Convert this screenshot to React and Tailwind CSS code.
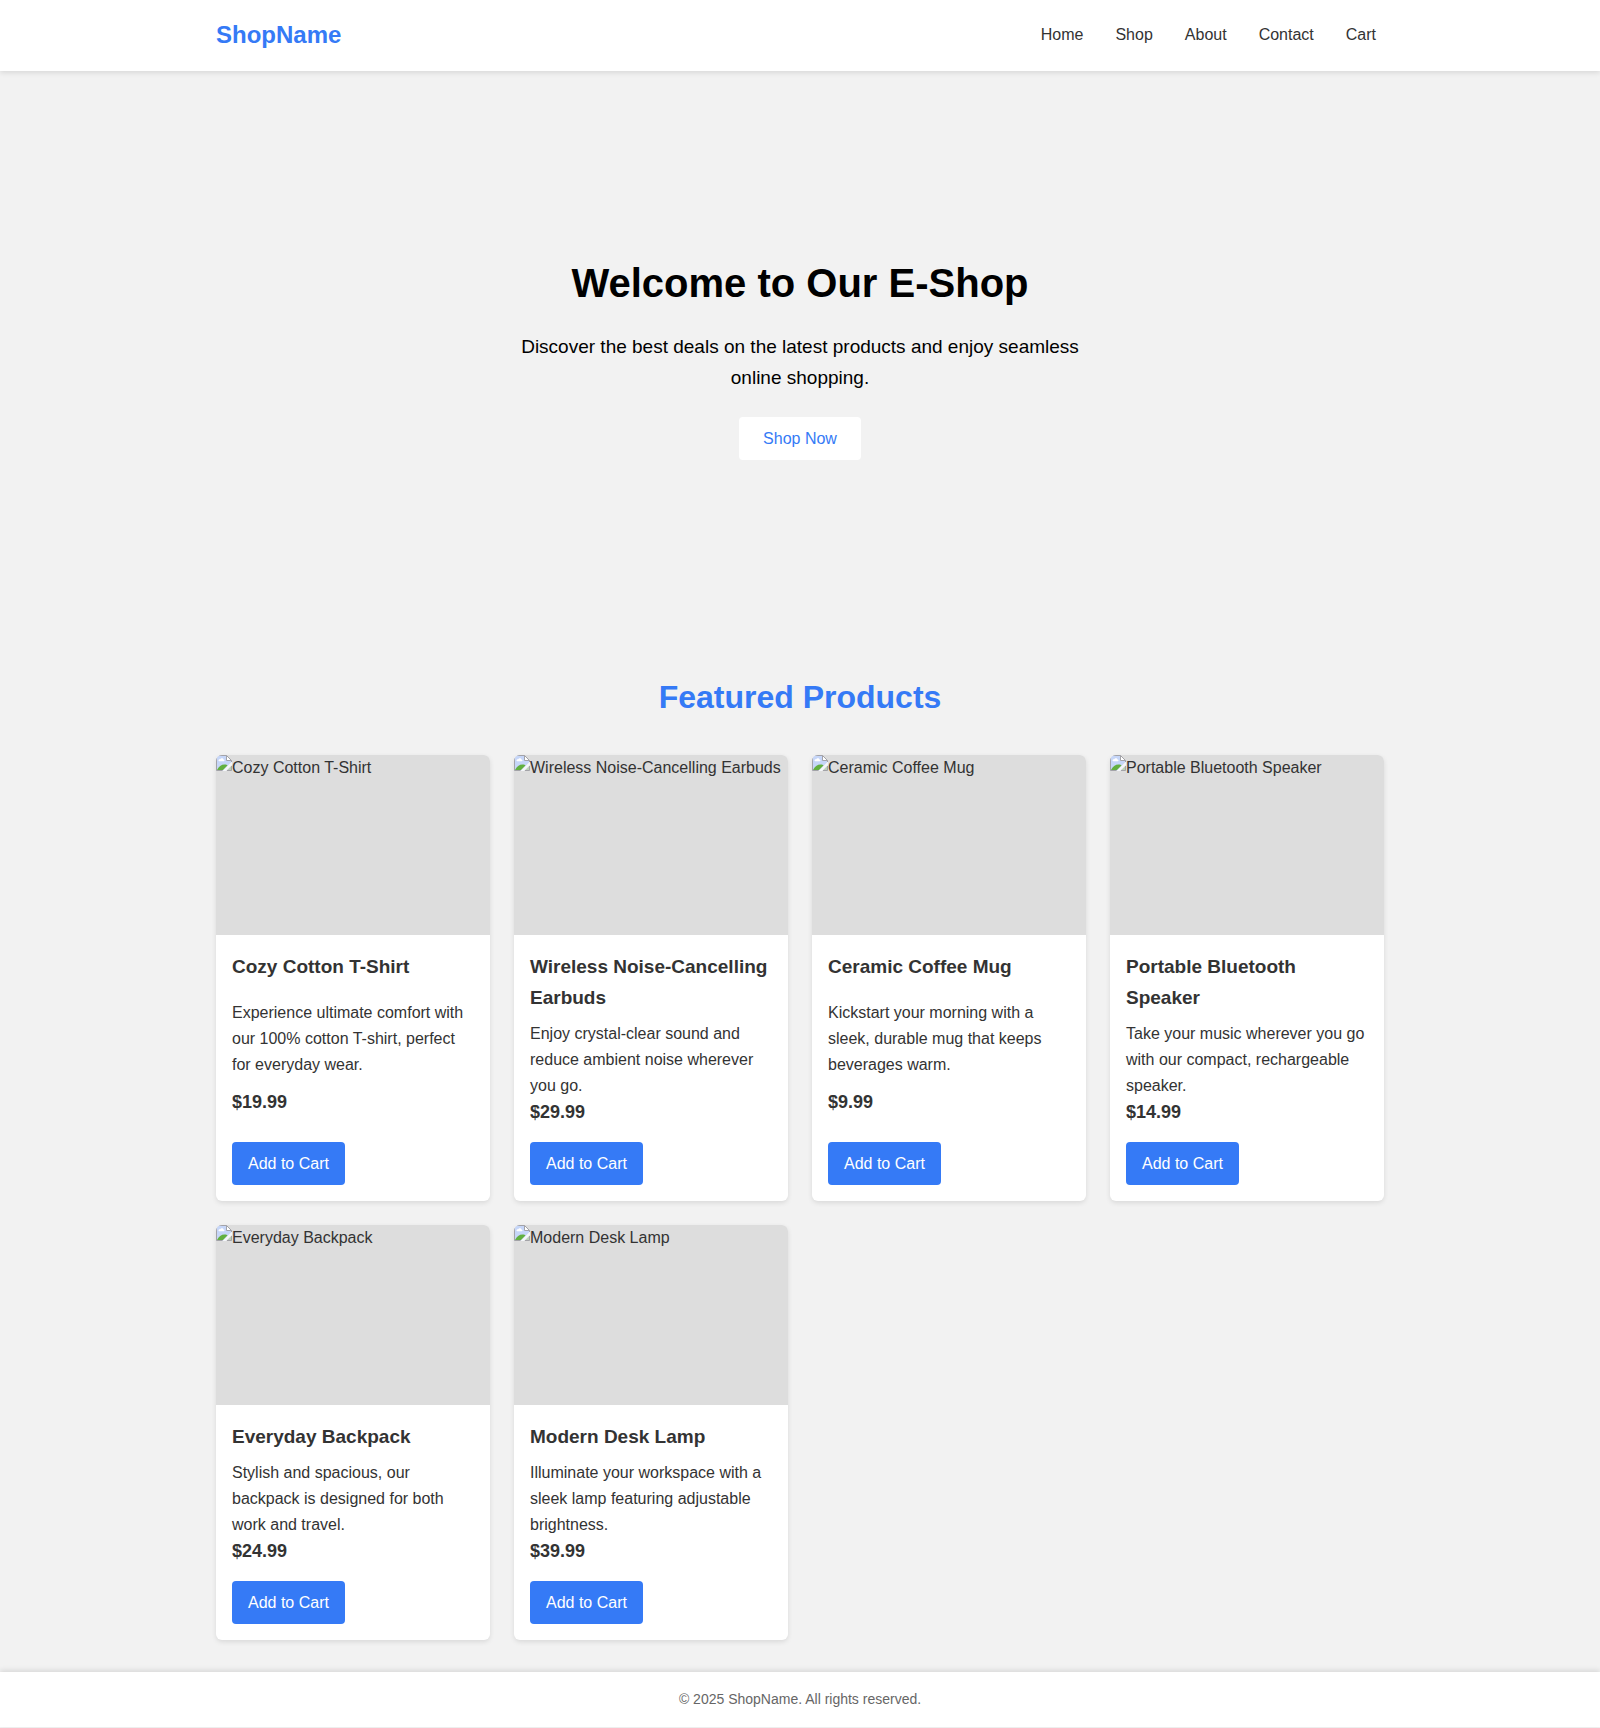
const links = ["Home", "Shop", "About", "Contact", "Cart"];

const products = [
  { name: "Cozy Cotton T-Shirt", text: "Experience ultimate comfort with our 100% cotton T-shirt, perfect for everyday wear.", price: "$19.99" },
  { name: "Wireless Noise-Cancelling Earbuds", text: "Enjoy crystal-clear sound and reduce ambient noise wherever you go.", price: "$29.99" },
  { name: "Ceramic Coffee Mug", text: "Kickstart your morning with a sleek, durable mug that keeps beverages warm.", price: "$9.99" },
  { name: "Portable Bluetooth Speaker", text: "Take your music wherever you go with our compact, rechargeable speaker.", price: "$14.99" },
  { name: "Everyday Backpack", text: "Stylish and spacious, our backpack is designed for both work and travel.", price: "$24.99" },
  { name: "Modern Desk Lamp", text: "Illuminate your workspace with a sleek lamp featuring adjustable brightness.", price: "$39.99" },
];

function MissingImageIcon() {
  return (
    <svg width="16" height="16" viewBox="0 0 16 16" className="shrink-0" aria-hidden="true">
      <path d="M0.5 0.5H10.5L15.5 5.5V7L7 15.5H0.5Z" fill="#c6d6f8" />
      <path d="M2.5 5.5C2.5 4.5 3.5 4 4.3 4.3C5 2.6 7.2 3 7.5 4.4C8.8 4.4 8.9 6.2 7.7 6.2H3.3C2.8 6.2 2.5 6 2.5 5.5Z" fill="#fff" />
      <path d="M1 15C2.5 11.5 5.5 9.5 8.5 9.5C10 9.5 11 9.9 11.5 10.5L7 15Z" fill="#62b03f" />
      <path d="M16 6.5L6.5 16H10L16 10Z" fill="#f4f6fa" />
      <path d="M15.5 11V15.5H11Z" fill="#b9d3b4" />
      <path d="M0.5 15.5V0.5H10.5L15.5 5.5V7M0.5 15.5H6.5" fill="none" stroke="#a3a3a8" />
      <path d="M10.5 0.5V5.5H15.5Z" fill="#fff" stroke="#a3a3a8" />
      <path d="M11 15.5H15.5V11" fill="none" stroke="#a3a3a8" />
    </svg>
  );
}

function ProductCard({ name, text, price }) {
  return (
    <article className="flex flex-col overflow-hidden rounded-md bg-white shadow-[0_2px_5px_rgba(0,0,0,0.1)]">
      <div className="flex h-[180px] items-start bg-[#ddd]">
        <MissingImageIcon />
        <span className="leading-[26px] whitespace-nowrap">{name}</span>
      </div>
      <div className="flex grow flex-col items-start justify-between p-4">
        <h3 className="mb-2 text-[19px] leading-[31px] font-bold">{name}</h3>
        <p className="leading-[26px]">{text}</p>
        <p className="mb-4 text-[18px] leading-[27px] font-bold">{price}</p>
        <button type="button" className="rounded bg-[#357af6] px-4 py-3 leading-[19px] text-white">
          Add to Cart
        </button>
      </div>
    </article>
  );
}

export default function App() {
  return (
    <div className="min-h-screen bg-[#f2f2f2] font-['Liberation_Sans',Arial,sans-serif] text-base text-[#333]">
      <header className="relative bg-white shadow-[0_2px_5px_rgba(0,0,0,0.1)]">
        <div className="mx-auto flex max-w-[1200px] items-center justify-between px-4 pt-4 pb-[17px]">
          <a href="#" className="text-2xl leading-[38px] font-bold text-[#357af6]">ShopName</a>
          <nav className="flex gap-4">
            {links.map((l) => (
              <a key={l} href="#" className="px-2 leading-[26px]">{l}</a>
            ))}
          </nav>
        </div>
      </header>
      <section className="flex flex-col items-center px-4 py-[180px] text-center text-black">
        <h1 className="mb-4 text-[40px] leading-[64px] font-bold">Welcome to Our E-Shop</h1>
        <p className="mb-6 max-w-[600px] text-[19px] leading-[31px]">
          Discover the best deals on the latest products and enjoy seamless online shopping.
        </p>
        <button type="button" className="rounded bg-white px-6 py-3 leading-[19px] text-[#357af6]">Shop Now</button>
      </section>
      <main className="mx-auto max-w-[1200px] px-4 py-8">
        <h2 className="mb-8 text-center text-[32px] leading-[51px] font-bold text-[#357af6]">Featured Products</h2>
        <div className="grid grid-cols-[repeat(auto-fill,minmax(250px,1fr))] gap-6">
          {products.map((p) => (
            <ProductCard key={p.name} {...p} />
          ))}
        </div>
      </main>
      <footer className="bg-white p-4 text-center text-sm text-[#666] shadow-[0_-2px_5px_rgba(0,0,0,0.1)]">
        <p className="leading-[23px]">© 2025 ShopName. All rights reserved.</p>
      </footer>
    </div>
  );
}
